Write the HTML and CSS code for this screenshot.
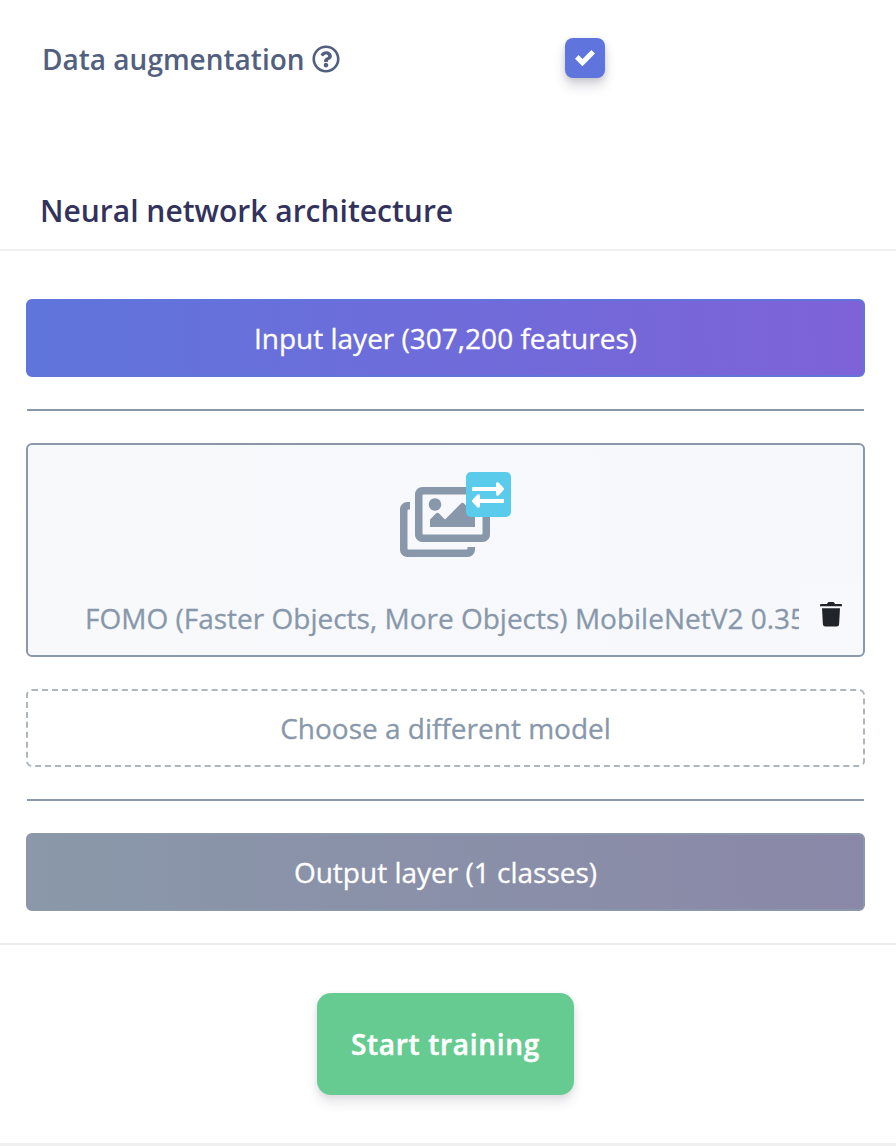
FILE: index.html
```html
<!DOCTYPE html>
<html lang="en">
<head>
<meta charset="utf-8">
<title>Neural network settings</title>
<link rel="stylesheet" href="styles.css">
</head>
<body>
<main class="page">
  <section class="setting">
    <div class="setting-label"><span class="label-text">Data augmentation</span>
      <svg class="help" viewBox="0 0 512 512"><path fill="currentColor" d="M256 8C119.043 8 8 119.083 8 256c0 136.997 111.043 248 248 248s248-111.003 248-248C504 119.083 392.957 8 256 8zm0 448c-110.532 0-200-89.431-200-200 0-110.495 89.472-200 200-200 110.491 0 200 89.471 200 200 0 110.53-89.431 200-200 200zm107.244-255.2c0 67.052-72.421 68.084-72.421 92.863V300c0 6.627-5.373 12-12 12h-45.647c-6.627 0-12-5.373-12-12v-8.659c0-35.745 27.1-50.034 47.579-61.516 17.561-9.845 28.324-16.541 28.324-29.579 0-17.246-21.999-28.693-39.784-28.693-23.189 0-33.894 10.977-48.942 29.969-4.057 5.12-11.46 6.071-16.666 2.124l-27.824-21.098c-5.107-3.872-6.251-11.066-2.644-16.363C184.846 131.491 214.94 112 261.794 112c49.071 0 101.45 38.304 101.45 88.8zM298 368c0 23.159-18.841 42-42 42s-42-18.841-42-42 18.841-42 42-42 42 18.841 42 42z"/></svg>
    </div>
    <div class="checkbox" role="checkbox" aria-checked="true" aria-label="Data augmentation">
      <svg width="20" height="20" viewBox="0 0 8 8"><path fill="#fff" d="M6.564.75l-3.59 3.612-1.538-1.55L0 4.26 2.974 7.25 8 2.193z"/></svg>
    </div>
  </section>
  <header class="heading"><h2 class="title">Neural network architecture</h2></header>
  <section class="layers">
    <div class="bar bar-input"><span class="input-text">Input layer (307,200 features)</span></div>
    <hr class="rule">
    <div class="model">
      <div class="model-icon">
        <svg class="images" viewBox="0 0 576 512"><path fill="currentColor" d="M480 416v16c0 26.51-21.49 48-48 48H48c-26.51 0-48-21.49-48-48V176c0-26.51 21.49-48 48-48h16v48H54a6 6 0 0 0-6 6v244a6 6 0 0 0 6 6h372a6 6 0 0 0 6-6v-10h48zm42-336H150a6 6 0 0 0-6 6v244a6 6 0 0 0 6 6h372a6 6 0 0 0 6-6V86a6 6 0 0 0-6-6zm6-48c26.51 0 48 21.49 48 48v256c0 26.51-21.49 48-48 48H144c-26.51 0-48-21.49-48-48V80c0-26.51 21.49-48 48-48h384zM264 144c0 22.091-17.909 40-40 40s-40-17.909-40-40 17.909-40 40-40 40 17.909 40 40zm-72 96l39.515-39.515c4.686-4.686 12.284-4.686 16.971 0L288 240l103.515-103.515c4.686-4.686 12.284-4.686 16.971 0L480 208v80H192v-48z"/></svg>
        <span class="swap"><svg width="45" height="45" viewBox="0 0 45 45" fill="#fff"><path d="M7 15h23v-3c0-1.700 1.800-2.200 2.800-1.200l4.600 4.900c.8.800.8 1.800 0 2.600l-4.600 4.900c-1 1-2.800.5-2.800-1.200v-3H7a1 1 0 0 1-1-1v-2a1 1 0 0 1 1-1z"/><path d="M37 27H14v-3c0-1.700-1.800-2.200-2.800-1.200l-4.600 4.900c-.8.800-.8 1.800 0 2.600l4.600 4.900c1 1 2.800.5 2.800-1.200v-3h23a1 1 0 0 0 1-1v-2a1 1 0 0 0-1-1z"/></svg></span>
      </div>
      <div class="model-name"><span class="name-text">FOMO (Faster Objects, More Objects) MobileNetV2 0.35</span></div>
      <div class="delete">
        <svg width="22" height="25" viewBox="0 0 22 25" fill="#212529"><path d="M1 2h6l.7-1.300Q8 0 9 0h4q1 0 1.300.7L15 2h6q1 0 1 1v1.300H0V3q0-1 1-1z"/><path d="M2 6.200h18l-.9 16q-.1 2.300-2.400 2.300H5.300q-2.300 0-2.400-2.300z"/></svg>
      </div>
    </div>
    <div class="choose"><span class="choose-text">Choose a different model</span></div>
    <hr class="rule">
    <div class="bar bar-output"><span class="output-text">Output layer (1 classes)</span></div>
  </section>
  <footer class="footer"><button class="train"><span class="train-text">Start training</span></button></footer>
</main>
</body>
</html>
```
FILE: styles.css
```css
* { box-sizing: border-box; }
body {
  margin: 0;
  background: #fff;
  font-family: "Open Sans", sans-serif;
  font-size: 28px;
  color: #8898aa;
}
svg { display: block; }
.page {
  display: flex;
  flex-direction: column;
  height: 1146px;
  overflow: hidden;
  border-bottom: 3px solid #f0f0f0;
}
.setting {
  display: grid;
  grid-template-columns: 523px 40px;
  align-items: start;
  height: 172px;
  padding: 38px 42px 0;
}
.setting-label {
  display: flex;
  align-items: center;
  gap: 7px;
  height: 42px;
  font-weight: 600;
  color: #525f7f;
}
.help { width: 28px; height: 28px; }
.checkbox {
  display: grid;
  place-items: center;
  width: 40px;
  height: 40px;
  border-radius: 8px;
  background: #5f74dc;
  box-shadow: 0 8px 12px rgba(50, 50, 93, .18), 0 2px 6px rgba(0, 0, 0, .13);
}
.heading {
  height: 79px;
  padding: 18px 40px 0;
  border-bottom: 2px solid #f0f0f0;
}
.title {
  margin: 0;
  font-size: 30px;
  line-height: 42px;
  font-weight: 600;
  color: #32325d;
}
.layers {
  height: 694px;
  padding: 48px 31px 0 26px;
  border-bottom: 2px solid #e9ecef;
}
.bar, .choose {
  display: grid;
  place-items: center;
  height: 78px;
  border-radius: 6px;
  line-height: 40px;
}
.bar, .choose, .model-name { -webkit-text-stroke: .3px currentColor; }
.bar { color: #fff; border: 2px solid; }
.bar-input {
  border-color: #5f75dc;
  background: linear-gradient(87deg, #5f75dc, #7e62d8);
}
.bar-output {
  border-color: #8a98a9;
  background: linear-gradient(87deg, #8a98a9, #8a88a8);
}
.rule {
  height: 2px;
  margin: 32px 1px;
  border: 0;
  background: #8a98a9;
}
.model {
  position: relative;
  height: 214px;
  border: 2px solid #8a98a9;
  border-radius: 6px;
  background: linear-gradient(87deg, #f8f9fb, #f7f8fc);
  padding: 37px 62px 0 57px;
}
.model-icon {
  position: relative;
  width: 90px;
  height: 80px;
  margin-left: 315px;
}
.images { width: 90px; height: 80px; }
.swap {
  position: absolute;
  left: 66px;
  top: -10px;
  border-radius: 5px;
  background: #5bcbeb;
}
.model-name {
  margin-top: 36px;
  line-height: 40px;
  white-space: nowrap;
  overflow: hidden;
}
.delete {
  position: absolute;
  right: 0;
  top: 138px;
  display: grid;
  place-items: center;
  width: 64px;
  height: 64px;
  padding-bottom: 1px;
  background: #f8f9fc;
}
.choose {
  margin-top: 32px;
  border: 2px dashed #adb5bd;
}
.footer {
  display: flex;
  justify-content: center;
  padding: 48px 5px 0 0;
}
.train {
  width: 257px;
  height: 102px;
  border: 0;
  border-radius: 14px;
  background: #66cb91;
  color: #fff;
  font: 600 28px/40px "Open Sans", sans-serif;
  letter-spacing: .7px;
  -webkit-text-stroke: .5px currentColor;
  box-shadow: 0 8px 12px rgba(50, 50, 93, .11), 0 2px 6px rgba(0, 0, 0, .08);
}
```
